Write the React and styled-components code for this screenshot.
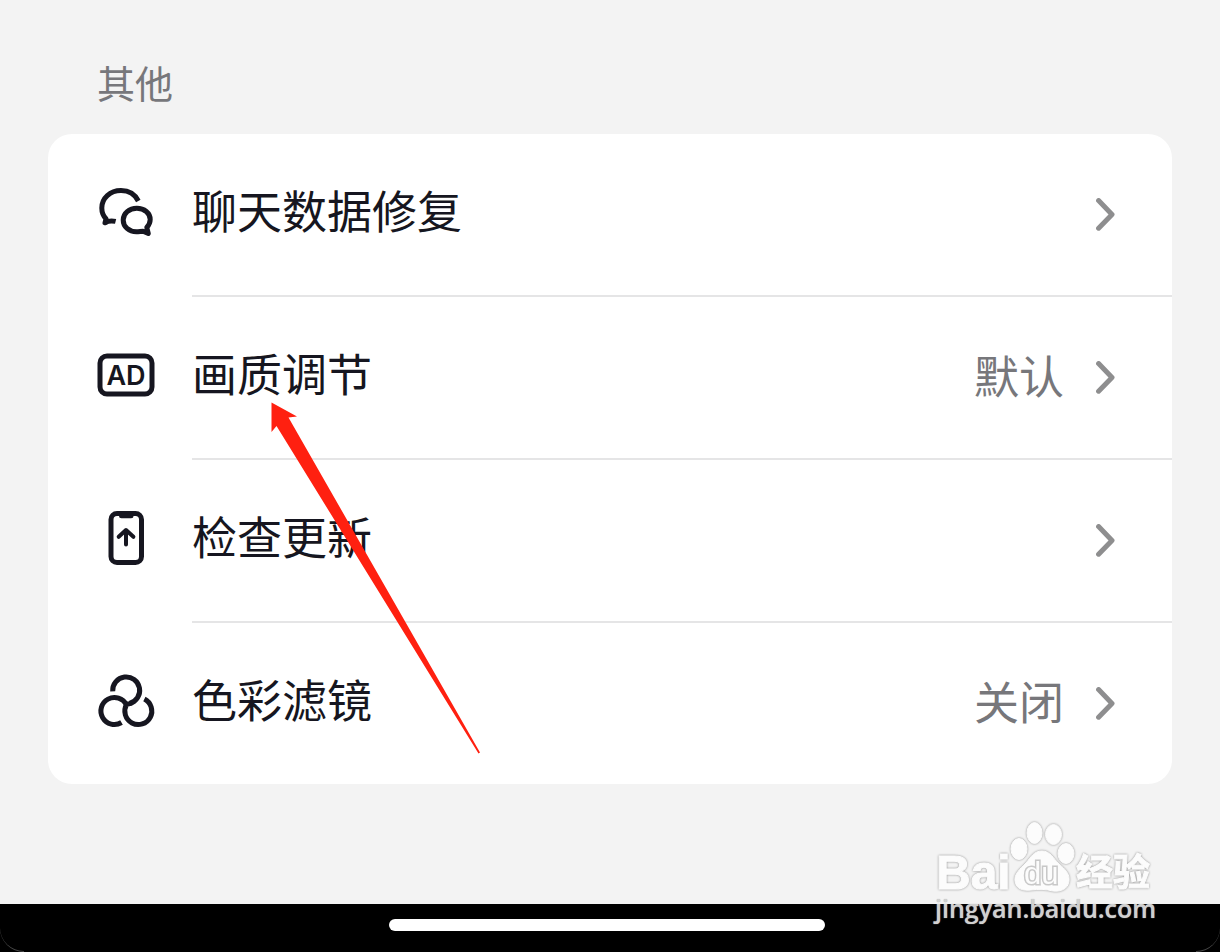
import React from 'react';
import styled, { createGlobalStyle } from 'styled-components';

const GlobalStyle = createGlobalStyle`
    * {
        box-sizing: border-box;
    }

    body {
        margin: 0;
        background: #F3F3F3;
        font-family: "Liberation Sans", "Noto Sans CJK SC", sans-serif;
    }
`;

const items = [
    { id: 'repair', title: '聊天数据修复', icon: ChatIcon },
    { id: 'quality', title: '画质调节', value: '默认', icon: QualityIcon },
    { id: 'update', title: '检查更新', icon: UpdateIcon },
    { id: 'filter', title: '色彩滤镜', value: '关闭', icon: FilterIcon },
];

export default function App() {
    return (
        <Page>
            <GlobalStyle />
            <Main>
                <SectionTitle>其他</SectionTitle>
                <Card>
                    <List>
                        {
                            items.map(item => {
                                return <SettingRow
                                    key={item.id}
                                    title={item.title}
                                    value={item.value}
                                    Icon={item.icon}
                                />
                            })
                        }
                    </List>
                    <Pointer viewBox='0 0 210 354' aria-hidden='true'>
                        <path d='M0.5 0.5 L26 14.5 L17.5 15.5 L209 350.5 L207.5 351.5 L5.5 24 L0.5 30 Z' />
                    </Pointer>
                </Card>
            </Main>
            <BottomBar>
                <HomeIndicator />
            </BottomBar>
            <Watermark />
        </Page>
    );
}

function SettingRow({ title, value, Icon }) {
    return (
        <Item>
            <RowButton type='button'>
                <IconBox viewBox='0 0 60 60' aria-hidden='true'>
                    <Icon />
                </IconBox>
                <RowBody>
                    <Label>{title}</Label>
                    {value && <Value>{value}</Value>}
                    <Chevron viewBox='0 0 20 34' aria-hidden='true'>
                        <path d='M2.6 2.6 L16 16.5 L2.6 30.2' />
                    </Chevron>
                </RowBody>
            </RowButton>
        </Item>
    );
}

function ChatIcon() {
    return (
        <>
            <path d='M42.3 17 C39 10.5 32.5 6.6 25 6.6 C14 6.6 5.8 14 5.8 24 C5.8 28.5 7.3 32 10 34.8 L9 38.8 C12 36.8 15.5 36.4 19.6 37.4' strokeLinecap='butt' />
            <path d='M50.8 43.5 C53 41 54.2 38.6 54.2 35.5 C54.2 29 48.3 24.3 40.8 24.3 C33.3 24.3 27.2 29.3 27.2 36 C27.2 42.8 33 47.7 40.5 47.7 C43 47.7 45 47.2 47 47.2 L52.3 49.5 Z' />
        </>
    );
}

function QualityIcon() {
    return (
        <>
            <rect x='4' y='9' width='52' height='38' rx='7' />
            <IconText x='30' y='38' textAnchor='middle'>AD</IconText>
        </>
    );
}

function UpdateIcon() {
    return (
        <>
            <rect x='15' y='3.5' width='30.5' height='49' rx='6' />
            <path d='M25.5 5.7 H35' />
            <path d='M30 34.5 V20.5 M22.7 26.8 L30 20 L37.4 26.8' strokeWidth='4' />
        </>
    );
}

function FilterIcon() {
    return (
        <>
            <path d='M16.7 19.3 A13.5 13.5 0 1 1 33.5 31.5' strokeLinecap='butt' />
            <path d='M25.5 50.5 A13.5 13.5 0 1 1 30.5 33' strokeLinecap='butt' />
            <path d='M28.5 31.8 Q32 32.6 35.5 30.9 M48.4 27 A13.5 13.5 0 1 1 30.5 32.5' strokeLinecap='butt' />
        </>
    );
}

function Watermark() {
    return (
        <Mark>
            <MarkLogo viewBox='0 0 222 76'>
                <text x='2' y='71' fontSize='48'>Bai</text>
                <ellipse cx='85' cy='31' rx='8' ry='10.5' />
                <ellipse cx='100.5' cy='15' rx='7.5' ry='10.5' />
                <ellipse cx='119.5' cy='16.5' rx='8' ry='10' />
                <ellipse cx='132' cy='35.5' rx='8' ry='10' />
                <path d='M108 33 C116 33 119 40 125 46 C131 51 136 56 135 63 C134 71 127 74 119 73 C111 71 105 71 97 72 C89 73 82 71 81 63 C80 56 86 51 92 45 C97 39 100 33 108 33 Z' />
                <MarkInner x='90' y='66' fontSize='31'>du</MarkInner>
                <text x='142' y='68' fontSize='37'>经验</text>
            </MarkLogo>
            <MarkUrl>jingyan.baidu.com</MarkUrl>
        </Mark>
    );
}

const Page = styled.div`
    position: relative;
    min-height: 100vh;
    display: flex;
    flex-direction: column;
`;

const Main = styled.main`
    flex: 1;
    padding: 57px 48px 64px;
`;

const SectionTitle = styled.h2`
    margin: 0 0 21px;
    padding-left: 49px;
    font-size: 38px;
    font-weight: 400;
    line-height: 56px;
    color: #77777B;
`;

const Card = styled.section`
    position: relative;
    background: #FFFFFF;
    border-radius: 24px;
`;

const List = styled.ul`
    margin: 0;
    padding: 0;
    list-style: none;
`;

const RowBody = styled.span`
    flex: 1;
    display: flex;
    align-items: center;
    gap: 32px;
    height: 163px;
    padding-right: 56px;
    border-bottom: 2px solid #E5E5E6;
`;

const Item = styled.li`
    &:last-child ${RowBody} {
        height: 161px;
        border-bottom: none;
    }
`;

const RowButton = styled.button`
    width: 100%;
    display: flex;
    align-items: center;
    gap: 36px;
    padding: 0 0 0 48px;
    border: none;
    background: none;
    font-family: inherit;
    text-align: left;
    cursor: pointer;
`;

const IconBox = styled.svg`
    width: 60px;
    height: 60px;
    margin-bottom: 4px;
    fill: none;
    stroke: #161620;
    stroke-width: 5;
    stroke-linecap: round;
    stroke-linejoin: round;
`;

const IconText = styled.text`
    font-family: Inter, sans-serif;
    font-size: 27px;
    font-weight: 600;
    fill: #161620;
    stroke: none;
`;

const Label = styled.span`
    flex: 1;
    padding-bottom: 2px;
    font-size: 45px;
    line-height: 64px;
    color: #161620;
`;

const Value = styled.span`
    padding-top: 2px;
    font-size: 45px;
    line-height: 64px;
    color: #77777B;
`;

const Chevron = styled.svg`
    width: 20px;
    height: 34px;
    fill: none;
    stroke: #8E8E8F;
    stroke-width: 5;
    stroke-linecap: round;
    stroke-linejoin: round;
`;

const Pointer = styled.svg`
    position: absolute;
    top: 268px;
    left: 223px;
    width: 210px;
    height: 354px;
    fill: #FF2010;
    pointer-events: none;
`;

const BottomBar = styled.footer`
    position: relative;
    display: flex;
    justify-content: center;
    padding: 15px 6px 21px 0;
    background: #000000;

    &::before,
    &::after {
        content: '';
        position: absolute;
        bottom: 0;
        width: 24px;
        height: 24px;
        border-bottom: 1px solid #4A4A4A;
    }

    &::before {
        left: 0;
        border-bottom-left-radius: 24px;
    }

    &::after {
        right: 0;
        border-bottom-right-radius: 24px;
    }
`;

const HomeIndicator = styled.div`
    width: calc(36% - 2px);
    height: 12px;
    border-radius: 6px;
    background: #FFFFFF;
`;

const Mark = styled.div`
    position: absolute;
    right: 64px;
    bottom: 30px;
    width: 222px;
    pointer-events: none;
`;

const MarkLogo = styled.svg`
    display: block;
    width: 222px;
    height: 76px;
    overflow: visible;
    fill: #FCFCFC;
    stroke: #FCFCFC;
    stroke-width: 1;
    font-family: "Liberation Sans", "Noto Sans CJK SC", sans-serif;
    font-weight: 700;
    filter: drop-shadow(0 0 1px #909090);
`;

const MarkInner = styled.text`
    stroke: #C8C8C8;
    stroke-width: 3;
    paint-order: stroke;
    font-weight: 400;
`;

const MarkUrl = styled.div`
    padding-left: 1px;
    font-family: "Open Sans", sans-serif;
    font-size: 25px;
    font-weight: 600;
    line-height: 28px;
    white-space: nowrap;
    color: #D0D0D0;
    text-shadow: 0 0 1px #B0B0B0;
`;
